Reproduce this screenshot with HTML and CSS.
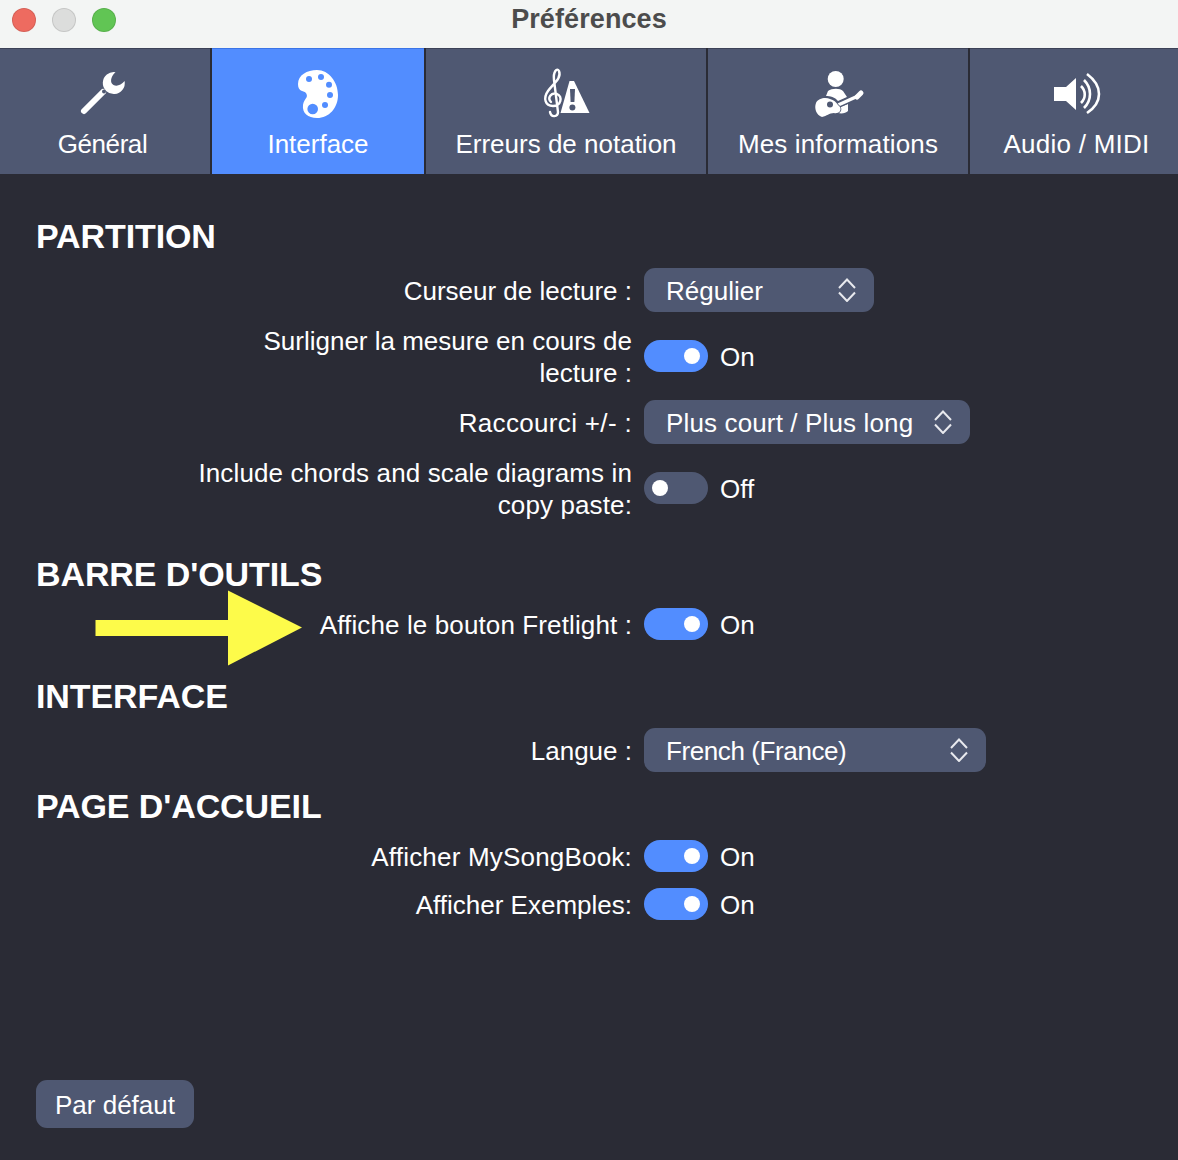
FILE: index.html
```html
<!DOCTYPE html>
<html lang="fr">
<head>
<meta charset="utf-8">
<title>Préférences</title>
<link rel="stylesheet" href="styles.css">
</head>
<body>
<div class="window">
  <header class="titlebar">
    <div class="lights"><span class="light red"></span><span class="light grey"></span><span class="light green"></span></div>
    <h1 class="title">Préférences</h1>
  </header>
  <nav class="tabs">
    <a class="tab tab-general">
      <svg class="tab-icon" viewBox="70 60 70 60"><path d="M84 111 103 92" class="i-line"/><path class="i-fill" d="M115.5 72.2A11 11 0 1 0 124.6 81C121 85.5 116.500 86.500 113.500 85C110 83 110 77 115.500 72.200Z"/><circle cx="104" cy="91.5" r="2" class="i-hole"/></svg>
      <span class="tab-label label-general">Général</span>
    </a>
    <a class="tab tab-interface active">
      <svg class="tab-icon" viewBox="283 60 70 60"><path class="i-fill" d="M298 84C298 75 307 70 317 70C329 70 338 82 338 95C338 108 329 118 317 118C308 118 302 113 303 105C304 98 309 98 306 93C303 90 298 92 298 84Z"/><g class="i-dots"><circle cx="309" cy="79" r="3"/><circle cx="321" cy="77" r="3"/><circle cx="329" cy="84.7" r="3"/><circle cx="330" cy="95" r="3"/><circle cx="325" cy="105" r="3"/><circle cx="312.7" cy="109" r="5.3"/></g></svg>
      <span class="tab-label">Interface</span>
    </a>
    <a class="tab tab-errors">
      <svg class="tab-icon" viewBox="531 60 70 60"><path class="i-clef" d="M550 112C551 118 558 117 558 112L554 80C553 72 557 67 559 71C562 78 553 84 548 91C543 98 545 106 553 106C561 106 563 97 557 94C551 92 547 98 551 102"/><path class="i-fill" d="M569.5 81H574L589.5 113H560.5Z"/><path class="i-mark" d="M570 89H575L574.4 102H570.6Z"/><circle cx="572.4" cy="107.5" r="3" class="i-hole"/></svg>
      <span class="tab-label">Erreurs de notation</span>
    </a>
    <a class="tab tab-info">
      <svg class="tab-icon" viewBox="803 60 70 60"><circle cx="835.700" cy="79" r="8" class="i-fill"/><path class="i-fill" d="M828 91C832 88 840 88 843 91L847 97L838 101C835 97 830 96 826 96Z"/><path class="i-fill" d="M840 107L848 104V111C846 113 842 114 838 113Z"/><path class="i-guitar-gap" d="M836 106 858 96"/><path class="i-guitar-neck" d="M836 106 858 96"/><path class="i-guitar-head" d="M857 97 861 93"/><path class="i-guitar" d="M816 103C818 98 826 97 830 99C834 100 836 102 838 105L840 107C842 111 838 114 834 113C829 113 827 116 822 117C816 115 814 108 816 103Z"/><circle cx="830" cy="104.500" r="3" class="i-hole"/></svg>
      <span class="tab-label label-info">Mes informations</span>
    </a>
    <a class="tab tab-audio">
      <svg class="tab-icon" viewBox="1039 60 70 60"><path class="i-fill" d="M1054 87H1066L1076 78V110L1066 101H1054Z"/><g class="i-arcs"><path d="M1081 86C1086 91 1086 98 1081 103"/><path d="M1084 80C1092 88 1092 100 1084 108"/><path d="M1087 74C1103 86 1103 102 1087 113"/></g></svg>
      <span class="tab-label label-audio">Audio / MIDI</span>
    </a>
  </nav>
  <main class="content">
    <section class="section section-score">
      <h2 class="heading">PARTITION</h2>
      <div class="rows">
        <div class="row"><label class="label">Curseur de lecture :</label><div class="select select-1"><span class="value">Régulier</span><svg class="chev" viewBox="0 0 18 24"><path d="M1 10 9 1.5 17 10M1 14.5 9 23 17 14.5"/></svg></div></div>
        <div class="row"><label class="label">Surligner la mesure en cours de lecture :</label><div class="toggle on"><i class="knob"></i></div><span class="state">On</span></div>
        <div class="row"><label class="label label-shortcut">Raccourci +/- :</label><div class="select select-2"><span class="value value-shortcut">Plus court / Plus long</span><svg class="chev" viewBox="0 0 18 24"><path d="M1 10 9 1.5 17 10M1 14.5 9 23 17 14.5"/></svg></div></div>
        <div class="row"><label class="label label-roomy">Include chords and scale diagrams in copy paste:</label><div class="toggle"><i class="knob"></i></div><span class="state">Off</span></div>
      </div>
    </section>
    <section class="section section-toolbar">
      <h2 class="heading">BARRE D'OUTILS</h2>
      <div class="rows">
        <div class="row"><label class="label label-roomy">Affiche le bouton Fretlight :</label><div class="toggle on"><i class="knob"></i></div><span class="state">On</span></div>
      </div>
    </section>
    <section class="section section-interface">
      <h2 class="heading">INTERFACE</h2>
      <div class="rows">
        <div class="row"><label class="label">Langue :</label><div class="select select-3"><span class="value value-lang">French (France)</span><svg class="chev" viewBox="0 0 18 24"><path d="M1 10 9 1.5 17 10M1 14.5 9 23 17 14.5"/></svg></div></div>
      </div>
    </section>
    <section class="section section-home">
      <h2 class="heading">PAGE D'ACCUEIL</h2>
      <div class="rows rows-wide">
        <div class="row"><label class="label label-songbook">Afficher MySongBook:</label><div class="toggle on"><i class="knob"></i></div><span class="state">On</span></div>
        <div class="row"><label class="label">Afficher Exemples:</label><div class="toggle on"><i class="knob"></i></div><span class="state">On</span></div>
      </div>
    </section>
    <button class="reset">Par défaut</button>
  </main>
  <svg class="arrow" viewBox="0 0 208 76"><path d="M0.500 30H133V0.500L207 37.500L133 75.500V46H0.500Z"/></svg>
</div>
</body>
</html>
```
FILE: styles.css
```css
* { box-sizing: border-box; }
html, body { margin: 0; padding: 0; }
body {
  font-family: "Liberation Sans", Arial, sans-serif;
  color: #fff;
  background: #2a2b35;
}
.window {
  position: relative;
  width: 1178px;
  height: 1160px;
  overflow: hidden;
  display: flex;
  flex-direction: column;
}
.titlebar {
  height: 48px;
  flex: none;
  background: #f3f5f4;
  display: flex;
  align-items: center;
  justify-content: center;
  position: relative;
  padding-bottom: 10px;
}
.lights {
  position: absolute;
  left: 12px;
  top: 8px;
  display: flex;
  gap: 16px;
}
.light {
  width: 24px;
  height: 24px;
  border-radius: 50%;
  border: 1px solid rgba(0, 0, 0, .1);
}
.red { background: #ee6b60; }
.grey { background: #dcdddc; }
.green { background: #61c554; }
.title {
  margin: 0;
  font-size: 27px;
  font-weight: 700;
  line-height: 32px;
  letter-spacing: .1px;
  color: #4c4c4c;
}
.tabs {
  display: flex;
  gap: 2px;
  height: 126px;
  flex: none;
  background: #2a2b35;
}
.tab {
  background: #4f5872;
  display: flex;
  flex-direction: column;
  align-items: center;
  font-size: 26px;
  line-height: 32px;
  padding-top: 12px;
  border-top: 1px solid #3c4257;
}
.tab.active { background: #528dff; border-top-color: #3a74e6; }
.tab-general { width: 210px; }
.tab-interface { width: 212px; }
.tab-errors { width: 280px; }
.tab-info { width: 260px; }
.tab-audio { width: 208px; }
.tab-icon { width: 70px; height: 60px; flex: none; margin-top: -1px; margin-bottom: 8px; }
.label-general { letter-spacing: -.43px; margin-right: 5px; }
.label-info { letter-spacing: .13px; }
.label-audio { letter-spacing: .25px; margin-left: 5px; }
.i-fill { fill: #fff; }
.i-line { stroke: #fff; stroke-width: 6; stroke-linecap: round; fill: none; }
.i-hole { fill: #4f5872; }
.i-mark { fill: #4f5872; }
.i-dots { fill: #528dff; }
.i-clef { fill: none; stroke: #fff; stroke-width: 2.4; stroke-linecap: round; }
.i-arcs { fill: none; stroke: #fff; stroke-width: 2.6; }
.i-guitar { fill: #fff; stroke: #4f5872; stroke-width: 1.5; paint-order: stroke; }
.i-guitar-gap { stroke: #4f5872; stroke-width: 6; fill: none; }
.i-guitar-neck { stroke: #fff; stroke-width: 3.5; fill: none; }
.i-guitar-head { stroke: #fff; stroke-width: 5; stroke-linecap: round; fill: none; }
.content {
  flex: 1;
  display: flex;
  flex-direction: column;
  padding: 42px 36px 32px;
}
.heading {
  margin: 0;
  font-size: 34px;
  line-height: 40px;
  font-weight: 700;
  letter-spacing: -.1px;
}
.rows { display: flex; flex-direction: column; gap: 12px; }
.rows-wide { gap: 16px; }
.row {
  display: flex;
  align-items: center;
  gap: 12px;
  min-height: 32px;
}
.label {
  width: 596px;
  margin: 1px 0 -1px;
  padding-left: 150px;
  text-align: right;
  font-size: 26px;
  line-height: 32px;
}
.label-roomy { letter-spacing: .12px; padding-left: 140px; }
.label-shortcut { letter-spacing: .33px; }
.label-songbook { letter-spacing: .2px; }
.section-score .heading { margin-bottom: 12px; }
.section-toolbar { margin-top: 34px; }
.section-toolbar .heading { margin-bottom: 14px; }
.section-interface { margin-top: 36px; }
.section-interface .heading { margin-bottom: 12px; }
.section-home { margin-top: 14px; }
.section-home .heading { margin-bottom: 14px; }
.select {
  height: 44px;
  background: #4f5872;
  border-radius: 11px;
  display: flex;
  align-items: center;
  justify-content: space-between;
  padding: 0 18px 0 22px;
  font-size: 26px;
}
.value { padding-top: 2px; }
.value-shortcut { letter-spacing: .14px; }
.value-lang { letter-spacing: -.4px; }
.select-1 { width: 230px; }
.select-2 { width: 326px; }
.select-3 { width: 342px; }
.chev { width: 18px; height: 24px; fill: none; stroke: #e8e9ee; stroke-width: 2; }
.toggle {
  width: 64px;
  height: 32px;
  flex: none;
  border-radius: 16px;
  background: #4f5872;
  display: flex;
  align-items: center;
  padding: 0 8px;
}
.toggle.on { background: #528dff; justify-content: flex-end; }
.knob { width: 16px; height: 16px; border-radius: 50%; background: #fff; }
.state { font-size: 26px; line-height: 32px; margin: 1px 0 -1px; }
.reset {
  margin-top: auto;
  align-self: flex-start;
  width: 158px;
  height: 48px;
  border: 0;
  border-radius: 11px;
  background: #4f5872;
  color: #fff;
  font: 26px "Liberation Sans", Arial, sans-serif;
  padding: 2px 0 0;
}
.arrow {
  position: absolute;
  left: 95px;
  top: 590px;
  width: 208px;
  height: 76px;
  fill: #fdfb4a;
}
```
